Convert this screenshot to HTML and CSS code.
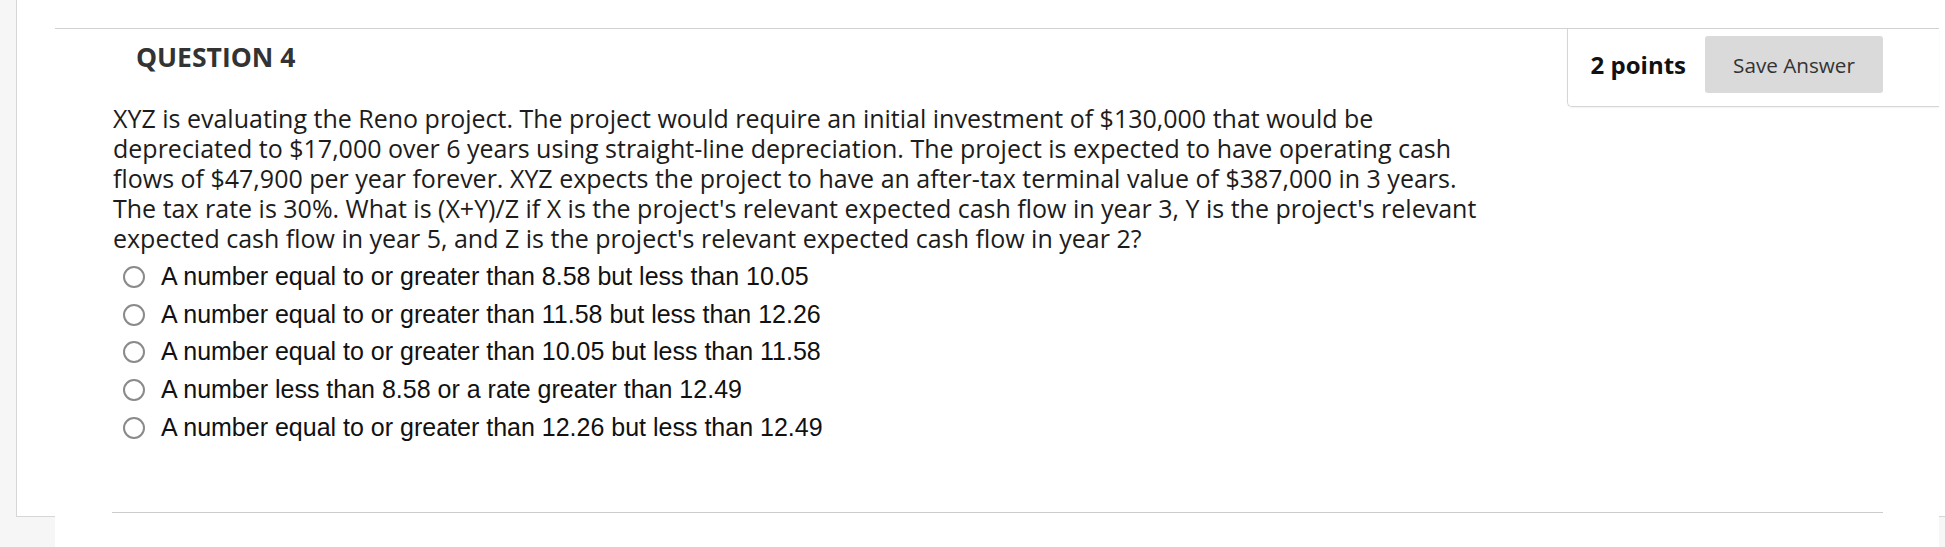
FILE: index.html
```html
<!DOCTYPE html>
<html lang="en">
<head>
<meta charset="utf-8">
<title>Question 4</title>
<link rel="stylesheet" href="styles.css">
</head>
<body>
<div class="outer">
  <div class="panel">
    <div class="question">
      <div class="points">
        <span class="points-label">2 points</span>
        <button class="save" type="button">Save Answer</button>
      </div>
      <h3 class="title">QUESTION 4</h3>
      <p class="qtext">XYZ is evaluating the Reno project. The project would require an initial investment of $130,000 that would be depreciated to $17,000 over 6 years using straight-line depreciation. The project is expected to have operating cash flows of $47,900 per year forever. XYZ expects the project to have an after-tax terminal value of $387,000 in 3 years. The tax rate is 30%. What is (X+Y)/Z if X is the project's relevant expected cash flow in year 3, Y is the project's relevant expected cash flow in year 5, and Z is the project's relevant expected cash flow in year 2?</p>
      <ul class="answers">
        <li class="opt"><span class="radio"></span><span class="opt-text">A number equal to or greater than 8.58 but less than 10.05</span></li>
        <li class="opt"><span class="radio"></span><span class="opt-text">A number equal to or greater than 11.58 but less than 12.26</span></li>
        <li class="opt"><span class="radio"></span><span class="opt-text">A number equal to or greater than 10.05 but less than 11.58</span></li>
        <li class="opt"><span class="radio"></span><span class="opt-text">A number less than 8.58 or a rate greater than 12.49</span></li>
        <li class="opt"><span class="radio"></span><span class="opt-text">A number equal to or greater than 12.26 but less than 12.49</span></li>
      </ul>
      <div class="sep"></div>
    </div>
  </div>
</div>
</body>
</html>
```
FILE: styles.css
```css
html, body {
  margin: 0;
  padding: 0;
}
body {
  background: #f6f6f6;
  width: 1945px;
  height: 547px;
  overflow: hidden;
}
.outer {
  margin-left: 16px;
  height: 516px;
  background: #ffffff;
  border-left: 1px solid #d6d6d6;
  border-bottom: 1px solid #d6d6d6;
  padding: 0 6px 0 38px;
}
.panel {
  background: #ffffff;
  min-height: 547px;
  padding-top: 28px;
  box-sizing: border-box;
}
.question {
  border-top: 1px solid #d2d2d2;
}
.points {
  float: right;
  display: flex;
  align-items: center;
  gap: 19px;
  padding: 7px 56px 13px 23px;
  border-left: 1px solid #d6d6d6;
  border-bottom: 1px solid #d6d6d6;
  border-bottom-left-radius: 5px;
  box-shadow: 0 1px 2px rgba(0,0,0,0.05);
}
.points-label {
  font-family: "Open Sans", "Liberation Sans", sans-serif;
  font-weight: 700;
  font-size: 24px;
  color: #111111;
}
.save {
  width: 178px;
  height: 57px;
  border: none;
  border-radius: 3px;
  background: #dadada;
  color: #333333;
  font-family: "Open Sans", "Liberation Sans", sans-serif;
  font-size: 20.7px;
  padding: 0;
}
.title {
  margin: 10px 0 0 81px;
  font-family: "Open Sans", "Liberation Sans", sans-serif;
  font-weight: 700;
  font-size: 26.5px;
  line-height: 36px;
  color: #333333;
}
.qtext {
  margin: 28px 0 0 58px;
  width: 1372px;
  font-family: "Open Sans", "Liberation Sans", sans-serif;
  font-size: 25px;
  line-height: 30px;
  color: #1c1c1c;
}
.answers {
  list-style: none;
  margin: 5px 0 0 58px;
  padding: 0;
}
.opt {
  display: flex;
  align-items: center;
  height: 37.7px;
  padding-left: 10px;
}
.radio {
  width: 22px;
  height: 22px;
  box-sizing: border-box;
  border: 2px solid #8a8a8a;
  border-radius: 50%;
  background: #ffffff;
  flex: none;
}
.opt-text {
  margin-left: 16px;
  font-family: "Liberation Sans", Arial, sans-serif;
  font-size: 25px;
  line-height: 37.7px;
  color: #111111;
}
.sep {
  clear: both;
  margin: 66px 56px 0 57px;
  border-top: 1px solid #cccccc;
}
```
